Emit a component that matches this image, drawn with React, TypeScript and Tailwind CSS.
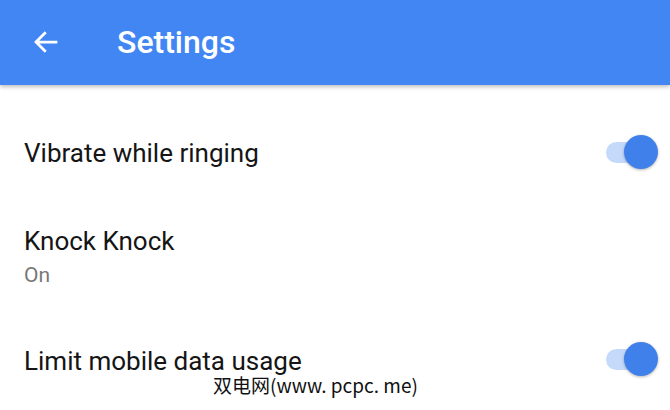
import React from "react";

function Toggle() {
  return (
    <div className="relative w-[54px] h-[34px] flex items-center">
      <div className="ml-[2px] w-[46px] h-[21px] rounded-full bg-[#c5d9fb]" />
      <div className="absolute right-0 top-0 w-[34px] h-[34px] rounded-full bg-[#3f80ea] shadow-[0_1px_3px_rgba(0,0,0,0.3)]" />
    </div>
  );
}

export default function App() {
  return (
    <div
      className="w-[670px] h-[410px] bg-white overflow-hidden relative"
      style={{ fontFamily: "Roboto, 'Noto Sans', sans-serif" }}
    >
      <div className="h-[85px] bg-[#4286f4] flex items-center shadow-[0_2px_4px_rgba(0,0,0,0.25)] relative z-10">
        <svg
          className="ml-[31px] mt-[-2px]"
          width="30"
          height="30"
          viewBox="0 0 24 24"
          fill="none"
        >
          <path
            d="M20 12H5M11 5l-7 7 7 7"
            stroke="white"
            strokeWidth="2.2"
            strokeLinecap="square"
          />
        </svg>
        <div className="ml-[56px] mt-[-2px] text-white text-[32px] font-medium leading-none">
          Settings
        </div>
      </div>

      <div className="flex items-center justify-between pl-[24px] pr-[12px] h-[68px] mt-[33px]">
        <div className="text-[26px] leading-none text-[#151515] mt-[2px]">Vibrate while ringing</div>
        <Toggle />
      </div>

      <div className="pl-[24px] mt-[40px] flex flex-col">
        <div className="text-[26px] leading-[30px] text-[#151515]">Knock Knock</div>
        <div className="text-[21px] leading-[24px] mt-[7px] text-[#777]">On</div>
      </div>

      <div className="flex items-center justify-between pl-[24px] pr-[12px] h-[40px] mt-[52px]">
        <div className="text-[26px] leading-none text-[#151515] mt-[4px]">Limit mobile data usage</div>
        <Toggle />
      </div>

      <div
        className="absolute left-[213px] top-[375px] text-[19px] leading-none text-[#111]"
        style={{ fontFamily: "'Noto Sans CJK SC', sans-serif" }}
      >
        双电网(www. pcpc. me)
      </div>
    </div>
  );
}
